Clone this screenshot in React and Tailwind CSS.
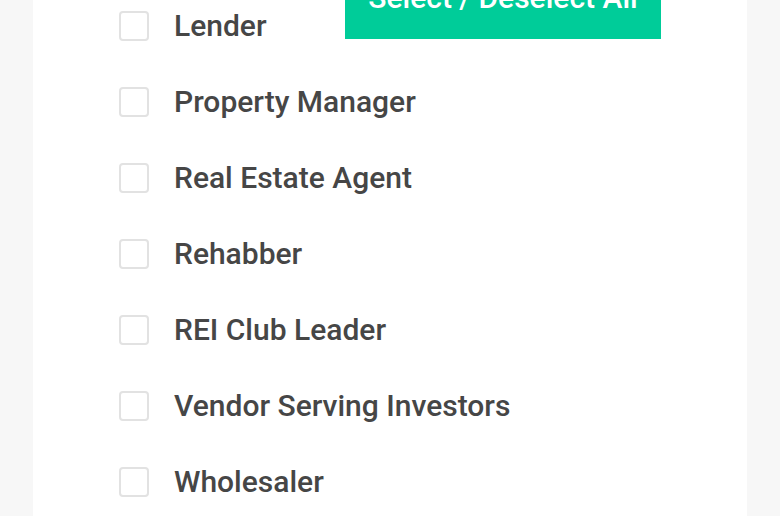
const roles = [
  "Lender",
  "Property Manager",
  "Real Estate Agent",
  "Rehabber",
  "REI Club Leader",
  "Vendor Serving Investors",
  "Wholesaler",
];

export default function App() {
  return (
    <div className="h-[516px] w-[780px] overflow-hidden bg-[#f7f7f7] font-['Roboto',sans-serif]">
      <div className="relative mx-[33px] h-full bg-white">
        <button className="absolute left-[312px] top-[-20px] flex h-[59px] w-[316px] justify-center bg-[#00cc99] pt-[3px] text-[30px] font-medium leading-none text-white">
          Select / Deselect All
        </button>
        <ul className="flex flex-col gap-[46px] pl-[86px] pt-[11px]">
          {roles.map((r) => (
            <li key={r} className="flex h-[30px] items-center">
              <span className="h-[30px] w-[30px] shrink-0 rounded-[4px] border-2 border-[#e2e2e2] bg-white" />
              <span className="ml-[25px] text-[30px] font-medium leading-none text-[#464646]">{r}</span>
            </li>
          ))}
        </ul>
      </div>
    </div>
  );
}
